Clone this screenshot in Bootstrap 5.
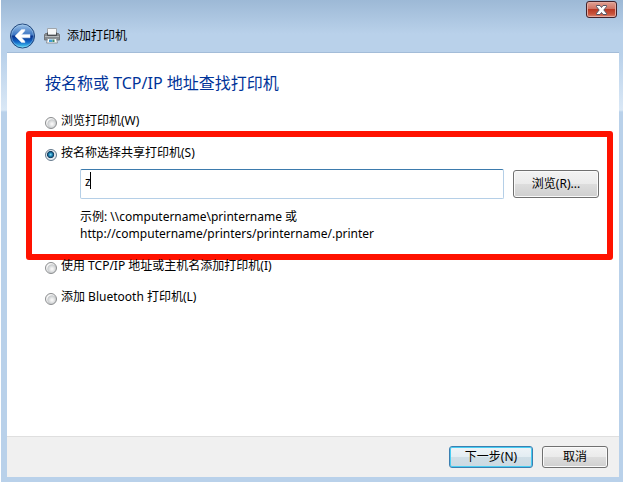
<!DOCTYPE html>
<html lang="zh-CN">
<head>
<meta charset="utf-8">
<meta name="viewport" content="width=device-width, initial-scale=1">
<title>添加打印机</title>
<link href="https://cdn.jsdelivr.net/npm/bootstrap@5.3.0/dist/css/bootstrap.min.css" rel="stylesheet">
<style>
  body { font: 12px/17px "Noto Sans", "Noto Sans CJK SC", sans-serif; color: #000; background: #fff; }
  .wizard { margin-left: 1px; padding: 0 4px 5px 6px; background: linear-gradient(#9db9d6, #b9d1ea 34px, #b9d1ea 54px, #dae8f6 110px, #b9d1ea 112px); }
  .titlebar { height: 53px; margin: 0 -4px 0 -6px; padding: 0 6px 0 9px; background: linear-gradient(#9db9d6, #b9d1ea 34px); }
  .titlebar-name { padding-top: 27px; margin: 0; font-size: 12px; line-height: 17px; }
  .back-btn { margin-top: 23px; width: 26px; height: 26px; }
  .printer-icon { margin: 21px 7px 0 8px; }
  .close-btn { width: 31px; height: 17px; margin-top: 1px; border: 1px solid #43222a; border-radius: 3px; box-shadow: inset 0 0 0 1px #e5aaa0; background: linear-gradient(#e0a193, #cf7060 48%, #b93a25 50%, #c9543c 80%, #d98570); }
  .wizard-page { padding: 18px 6px 0 19px; border-top: 1px solid #a3bcd8; margin-top: -1px; }
  .wizard-title { font-size: 16px; line-height: 24px; color: #003399; margin: 0 0 20px 19px; }
  .choice { padding-left: 19px; height: 16px; line-height: 12px; }
  .choice-input { appearance: none; width: 12px; height: 12px; margin: 2px 4px 0 0; border: 1px solid #8a8c8e; border-radius: 50%; background: radial-gradient(circle at 60% 60%, #f5f5f5 10%, #c9ccce 50%, #f4f4f4 60%); flex: none; }
  .choice-input:checked { border-color: #64798c; background: radial-gradient(circle at 46% 46%, #8be0f8 0, #1c86b8 22%, #123a5c 42%, #e4eaef 52%); }
  .choice-last { margin-top: 15px; }
  .marked { border: 6px solid #ff1200; border-radius: 3px; padding: 10px 8px 12px 0; }
  .marked .choice { padding-left: 13px; }
  .indent { padding: 6px 0 0 48px; }
  .name-row { gap: 9px; }
  .name-box { height: 30px; padding: 0 4px 6px; border: 1px solid #b5cfe7; border-top-color: #3d7bad; border-radius: 2px; font: inherit; color: #000; background: #fff; outline: 0; }
  .caret-line { left: 10px; top: 3px; width: 1px; height: 17px; background: #000; }
  .example { margin: 9px 0 0; }
  .btn.win-btn { font: inherit; color: #000; padding: 0 0 2px; height: 22px; border: 1px solid #707070; border-radius: 3px; box-shadow: inset 0 0 0 1px #fafafa; background: linear-gradient(#f3f3f3, #ebebeb 48%, #dddddd 50%, #cfcfcf); }
  .btn.browse-btn { width: 86px; height: 28px; }
  .btn.next-btn { width: 84px; border-color: #3c7fb1; box-shadow: inset 0 0 0 1px #48cdf2; background: linear-gradient(#eff4f7, #e3edf2 48%, #cfdee6 50%, #ccd9e1); }
  .btn.cancel-btn { width: 66px; }
  .wizard-footer { background: #f0f0f0; border-top: 1px solid #dfdfdf; padding: 9px 11px; gap: 9px; }
</style>
</head>
<body>
<main class="wizard min-vh-100 d-flex flex-column">
  <header class="titlebar d-flex align-items-start">
    <button type="button" class="back-btn border-0 bg-transparent p-0" aria-label="返回">
      <svg class="d-block" width="26" height="26" viewBox="0 0 26 26" aria-hidden="true">
        <defs>
          <linearGradient id="orb" x2="0" y2="1"><stop offset="0" stop-color="#9cc2e8"/><stop offset=".46" stop-color="#3a74c2"/><stop offset=".5" stop-color="#07308c"/><stop offset=".75" stop-color="#1468c8"/><stop offset="1" stop-color="#55e0fa"/></linearGradient>
        </defs>
        <circle cx="12.500" cy="13" r="12" fill="url(#orb)" stroke="#20467d" stroke-width="1"/>
        <circle cx="12.500" cy="13" r="11" fill="none" stroke="#b7dcf3" stroke-opacity=".5" stroke-width=".8"/>
        <path d="M5 13 11.500 6.500H15l-.3 1.500-3.100 3.400H20v3.400h-8.400l3.100 3.200.3 1.500h-3.500z" fill="#fff" stroke="#dcebfa" stroke-width=".5" stroke-linejoin="round"/>
      </svg>
    </button>
    <svg class="printer-icon" width="16" height="26" viewBox="0 0 16 26" aria-hidden="true">
      <path d="M3.500 7.500h9v7h-9z" fill="#f5f7f8" stroke="#a0a6ac"/>
      <path d="M1.500 12.500h2V14h9v-1.500h2l1 1v5.500H.5v-5.500z" fill="#858a8e" stroke="#70757a"/>
      <path d="M3.500 11.500v3h9v-3" fill="none" stroke="#4a4e52"/>
      <path d="M1 15.500h14" stroke="#b5b9bc"/>
      <path d="M3.500 17.500h9l1 4.500h-11z" fill="#fff" stroke="#8c949b"/>
      <path d="M5 18.500h3.500v2.500H5z" fill="#3c9bd8"/><path d="M8.500 18.500h2V21h-2z" fill="#3c8b64"/>
    </svg>
    <h1 class="titlebar-name fw-normal">添加打印机</h1>
    <button type="button" class="close-btn ms-auto p-0" aria-label="关闭">
      <svg class="d-block mx-auto" width="13" height="12" viewBox="0 0 13 12" aria-hidden="true">
        <path d="M1.500 1.500H5l1.500 2 1.500-2h3.500v1.200L8.800 6l2.700 3.300v1.200H8l-1.500-2-1.500 2H1.500V9.300L4.200 6 1.500 2.700z" fill="#fff" stroke="#535666"/>
      </svg>
    </button>
  </header>

  <form class="d-flex flex-column flex-grow-1">
    <section class="wizard-page bg-white flex-grow-1">
      <h2 class="wizard-title fw-normal">按名称或 TCP/IP 地址查找打印机</h2>
      <div class="choice d-flex">
        <input class="choice-input" type="radio" name="how" id="browse"><label for="browse">浏览打印机(W)</label>
      </div>
      <div class="marked">
        <div class="choice d-flex">
          <input class="choice-input" type="radio" name="how" id="byname" checked><label for="byname">按名称选择共享打印机(S)</label>
        </div>
        <div class="indent">
          <div class="d-flex align-items-center name-row">
            <div class="position-relative flex-grow-1">
              <input class="name-box d-block w-100" type="text" value="z" aria-label="打印机名称">
              <span class="caret-line position-absolute"></span>
            </div>
            <button type="button" class="btn win-btn browse-btn">浏览(R)...</button>
          </div>
          <p class="example">示例: \\computername\printername 或<br>http://computername/printers/printername/.printer</p>
        </div>
      </div>
      <div class="choice d-flex">
        <input class="choice-input" type="radio" name="how" id="tcpip"><label for="tcpip">使用 TCP/IP 地址或主机名添加打印机(I)</label>
      </div>
      <div class="choice choice-last d-flex">
        <input class="choice-input" type="radio" name="how" id="bt"><label for="bt">添加 Bluetooth 打印机(L)</label>
      </div>
    </section>
    <footer class="wizard-footer d-flex justify-content-end">
      <button type="submit" class="btn win-btn next-btn">下一步(N)</button>
      <button type="button" class="btn win-btn cancel-btn">取消</button>
    </footer>
  </form>
</main>
<script src="https://cdn.jsdelivr.net/npm/bootstrap@5.3.0/dist/js/bootstrap.bundle.min.js"></script>
</body>
</html>
